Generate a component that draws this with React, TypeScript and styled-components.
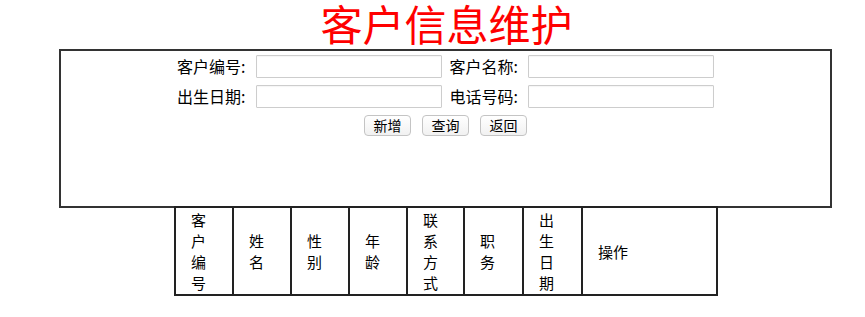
import React from "react";
import styled, { createGlobalStyle } from "styled-components";

const GlobalStyle = createGlobalStyle`
	body {
		margin: 0;
		background: #fff;
		font-family: "Liberation Serif", "Noto Sans CJK SC", serif;
		color: #000;
	}
`;

const columns = [
	{ title: "客户编号", width: 58 },
	{ title: "姓名", width: 58 },
	{ title: "性别", width: 58 },
	{ title: "年龄", width: 58 },
	{ title: "联系方式", width: 57 },
	{ title: "职务", width: 59 },
	{ title: "出生日期", width: 59 },
	{ title: "操作", width: 135 },
];

export default function App() {
	return (
		<Page>
			<GlobalStyle />
			<Title>客户信息维护</Title>
			<SearchPanel>
				<FormRow>
					<Label>客户编号:</Label>
					<TextInput type="text" />
					<Label $spaced>客户名称:</Label>
					<TextInput type="text" />
				</FormRow>
				<FormRow>
					<Label>出生日期:</Label>
					<TextInput type="text" />
					<Label $spaced>电话号码:</Label>
					<TextInput type="text" />
				</FormRow>
				<ButtonRow>
					<ActionButton>新增</ActionButton>
					<ActionButton>查询</ActionButton>
					<ActionButton>返回</ActionButton>
				</ButtonRow>
			</SearchPanel>
			<ResultTable>
				<thead>
					<tr>
						{columns.map((col, index) => (
							<HeadCell key={index} $width={col.width} $first={index === 0}>
								{col.title}
							</HeadCell>
						))}
					</tr>
				</thead>
			</ResultTable>
		</Page>
	);
}

const Page = styled.div`
	width: 865px;
`;

const Title = styled.h1`
	margin: 0 0 3px 0;
	padding-left: 28px;
	text-align: center;
	font-family: "Noto Sans CJK SC", sans-serif;
	font-size: 42px;
	line-height: 46px;
	font-weight: normal;
	color: #ff0000;
`;

const SearchPanel = styled.div`
	box-sizing: border-box;
	margin-left: 59px;
	width: 773px;
	height: 159px;
	border: 2px solid #333;
	padding-top: 3px;
	display: flex;
	flex-direction: column;
	align-items: center;
`;

const FormRow = styled.div`
	display: flex;
	align-items: center;
	margin-bottom: 6px;
`;

const Label = styled.span<{ $spaced?: boolean }>`
	font-family: "Noto Sans CJK SC", sans-serif;
	font-size: 16px;
	margin-left: ${(p) => (p.$spaced ? "8px" : "0")};
	margin-right: 10px;
	white-space: nowrap;
`;

const TextInput = styled.input`
	box-sizing: border-box;
	width: 186px;
	height: 23px;
	margin: 0;
	border: 1px solid #cdcdcd;
	border-radius: 1px;
	background: #fff;
	box-shadow: inset 0 1px 1px rgba(0, 0, 0, 0.04);
	outline: none;
`;

const ButtonRow = styled.div`
	display: flex;
	gap: 11px;
	margin-top: 1px;
`;

const ActionButton = styled.button`
	box-sizing: border-box;
	width: 47px;
	height: 21px;
	padding: 0;
	border: 1px solid #c4c4c4;
	border-radius: 4px;
	background: linear-gradient(#ffffff, #f1f1f1);
	font-family: "Noto Sans CJK SC", sans-serif;
	font-size: 14px;
	line-height: 19px;
	color: #000;
`;

const ResultTable = styled.table`
	margin: -2px 0 0 174px;
	border-collapse: separate;
	border-spacing: 0;
	border: 2px solid #222;
	table-layout: fixed;
	width: 542px;
`;

const HeadCell = styled.th<{ $width: number; $first: boolean }>`
	box-sizing: border-box;
	width: ${(p) => (p.$first ? p.$width - 2 : p.$width)}px;
	padding: 1px 15px;
	border-left: ${(p) => (p.$first ? "none" : "2px solid #222")};
	font-family: "Noto Sans CJK SC", sans-serif;
	font-size: 15px;
	line-height: 21px;
	font-weight: normal;
	text-align: left;
	vertical-align: middle;
`;
